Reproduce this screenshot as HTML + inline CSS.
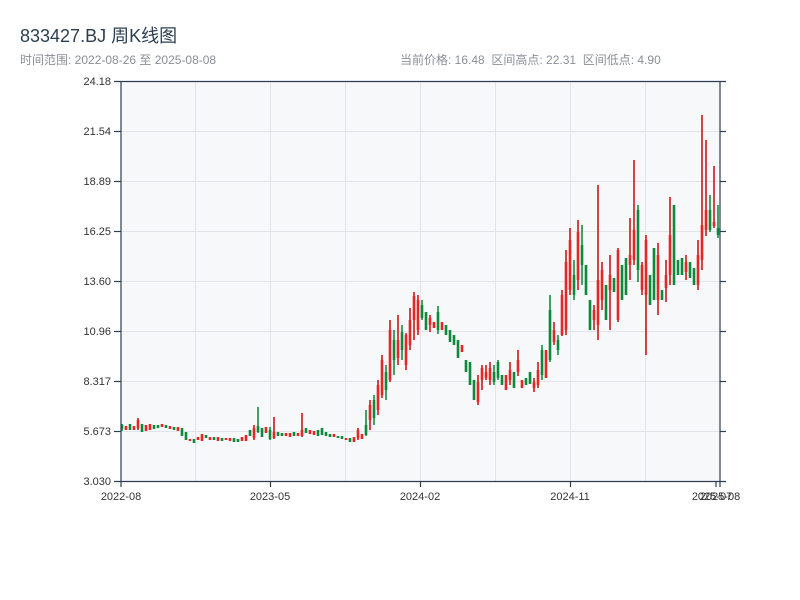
<!DOCTYPE html>
<html><head><meta charset="utf-8"><style>
body{margin:0;width:800px;height:600px;background:#fff;font-family:"Liberation Sans","Noto Sans CJK SC",sans-serif;overflow:hidden}
.t{position:absolute;left:20px;top:22px;font-size:18px;color:#2c3e50}
.s{position:absolute;top:51px;font-size:12px;color:#8a8f96}
</style></head><body>
<div class="t">833427.BJ 周K线图</div>
<div class="s" style="left:20px">时间范围: 2022-08-26 至 2025-08-08</div>
<div class="s" style="left:400px">当前价格: 16.48&nbsp;&nbsp;区间高点: 22.31&nbsp;&nbsp;区间低点: 4.90</div>
<svg width="800" height="600" style="position:absolute;left:0;top:0" font-family="Liberation Sans, sans-serif" font-size="11" fill="#333">
<rect x="121" y="81" width="599" height="400" fill="#f7f8fa"/>
<g stroke="#e1e4e8" stroke-width="1">
<line x1="121" x2="720" y1="131.5" y2="131.5"/><line x1="121" x2="720" y1="181.5" y2="181.5"/><line x1="121" x2="720" y1="231.5" y2="231.5"/><line x1="121" x2="720" y1="281.5" y2="281.5"/><line x1="121" x2="720" y1="331.5" y2="331.5"/><line x1="121" x2="720" y1="381.5" y2="381.5"/><line x1="121" x2="720" y1="431.5" y2="431.5"/>
<line x1="195.5" x2="195.5" y1="81" y2="481"/><line x1="270.5" x2="270.5" y1="81" y2="481"/><line x1="345.5" x2="345.5" y1="81" y2="481"/><line x1="420.5" x2="420.5" y1="81" y2="481"/><line x1="495.5" x2="495.5" y1="81" y2="481"/><line x1="570.5" x2="570.5" y1="81" y2="481"/><line x1="645.5" x2="645.5" y1="81" y2="481"/>
</g>
<path fill="none" stroke="#c80a0a" stroke-width="1.5" d="M138,418V430M254,425V440M274,417V439M302,413V437M358,428V440M370,400V430M378,380V415M382,355V398M390,320V382M398,315V365M406,333V370M410,308V350M414,292V340M418,295V335M430,315V332M478,375V405M482,365V390M486,365V380M490,362V385M510,362V385M518,350V376M534,378V392M538,362V388M546,350V378M554,322V345M562,290V336M566,250V335M570,228V295M578,220V290M594,305V330M598,185V340M602,262V310M610,255V330M618,248V322M630,218V280M634,160V265M642,262V295M646,235V355M658,243V315M666,260V302M670,197V285M686,255V280M698,240V290M702,115V270M706,140V236M714,166V228"/>
<path fill="none" stroke="#0a8238" stroke-width="1.5" d="M122,424V431M258,407V433M270,427V440M366,410V436M374,395V425M386,365V400M394,330V375M402,325V360M422,300V320M438,306V334M494,365V385M498,360V380M542,345V380M550,295V362M558,335V355M574,260V300M582,225V285M638,205V282M710,195V232M718,205V238"/>
<path fill="none" stroke="#e32626" stroke-width="2.6" d="M126,426V430M134,426V430M138,420V428M146,425V431M150,424V430M162,424V427M170,426V429M178,427V431M190,439V441M198,437V440M202,434V441M210,437V440M218,437V441M226,438V440M230,438V441M242,437V441M246,435V441M254,428V438M266,427V433M274,432V438M286,433V436M290,433V437M298,433V436M302,430V436M310,430V434M314,431V435M334,434V437M346,438V440M354,437V442M358,430V438M362,434V439M370,405V420M378,385V410M382,360V395M390,330V380M398,340V358M406,335V365M410,320V345M414,296V320M418,300V330M430,318V325M434,322V328M442,322V330M462,345V352M478,382V402M482,368V380M486,372V378M490,368V380M506,375V390M510,370V380M518,360V372M522,380V388M534,382V388M538,370V385M546,350V378M554,330V342M562,295V335M566,262V330M570,240V290M578,232V280M594,310V320M598,280V325M602,270V300M610,275V290M618,250V320M630,255V265M634,230V260M642,265V290M646,240V295M658,255V300M666,275V288M670,235V275M686,262V272M698,255V285M702,225V260M706,210V230M714,222V226"/>
<path fill="none" stroke="#0a8a3a" stroke-width="2.6" d="M122,425V429M130,424V430M142,424V432M154,425V429M158,425V428M166,425V428M174,427V430M182,428V436M186,432V440M194,439V443M206,435V438M214,437V440M222,438V441M234,438V442M238,439V442M250,430V436M258,426V432M262,428V437M270,430V439M278,432V436M282,433V436M294,432V436M306,428V433M318,430V436M322,428V435M326,432V436M330,434V437M338,436V438M342,436V439M350,438V442M366,425V435M374,400V418M386,372V390M394,340V360M402,332V350M422,305V318M426,312V330M438,312V330M446,325V335M450,330V342M454,335V345M458,340V358M466,360V372M470,362V385M474,380V400M494,372V382M498,362V378M502,375V385M514,372V388M526,378V385M530,372V384M542,350V375M550,310V360M558,340V350M574,275V295M582,245V265M586,265V295M590,300V330M606,285V320M614,278V292M622,265V300M626,258V295M638,210V270M650,275V305M654,248V300M662,290V300M674,205V285M678,260V275M682,258V275M690,262V278M694,268V285M710,210V230M718,228V235"/>
<g stroke="#2c3e50" stroke-width="1.2">
<line x1="114" x2="726" y1="81.5" y2="81.5"/><line x1="121" x2="121" y1="81" y2="487"/><line x1="720" x2="720" y1="81" y2="487"/><line x1="114" x2="726" y1="481.5" y2="481.5"/>
<line x1="114" x2="121" y1="131.5" y2="131.5"/><line x1="114" x2="121" y1="181.5" y2="181.5"/><line x1="114" x2="121" y1="231.5" y2="231.5"/><line x1="114" x2="121" y1="281.5" y2="281.5"/><line x1="114" x2="121" y1="331.5" y2="331.5"/><line x1="114" x2="121" y1="381.5" y2="381.5"/><line x1="114" x2="121" y1="431.5" y2="431.5"/>
<line x1="720" x2="726" y1="131.5" y2="131.5"/><line x1="720" x2="726" y1="181.5" y2="181.5"/><line x1="720" x2="726" y1="231.5" y2="231.5"/><line x1="720" x2="726" y1="281.5" y2="281.5"/><line x1="720" x2="726" y1="331.5" y2="331.5"/><line x1="720" x2="726" y1="381.5" y2="381.5"/><line x1="720" x2="726" y1="431.5" y2="431.5"/>
<line x1="270.5" x2="270.5" y1="481" y2="487"/><line x1="420.5" x2="420.5" y1="481" y2="487"/><line x1="570.5" x2="570.5" y1="481" y2="487"/><line x1="716" x2="716" y1="481" y2="487"/>
</g>
<g text-anchor="end">
<text x="111" y="85">24.18</text><text x="111" y="135">21.54</text><text x="111" y="185">18.89</text><text x="111" y="235">16.25</text><text x="111" y="285">13.60</text><text x="111" y="335">10.96</text><text x="111" y="385">8.317</text><text x="111" y="435">5.673</text><text x="111" y="485">3.030</text>
</g>
<g text-anchor="middle">
<text x="121" y="500">2022-08</text><text x="270" y="500">2023-05</text><text x="420" y="500">2024-02</text><text x="570" y="500">2024-11</text><text x="712" y="500">2025-07</text><text x="720" y="500">2025-08</text>
</g>
</svg>
</body></html>
